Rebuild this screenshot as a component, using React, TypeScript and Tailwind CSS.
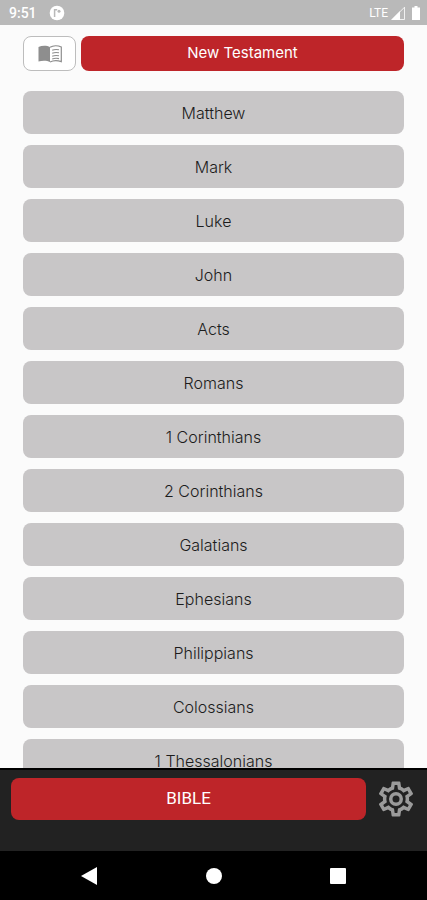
import React, { useState } from 'react';

const books = [
  'Matthew',
  'Mark',
  'Luke',
  'John',
  'Acts',
  'Romans',
  '1 Corinthians',
  '2 Corinthians',
  'Galatians',
  'Ephesians',
  'Philippians',
  'Colossians',
  '1 Thessalonians',
];

function BookIcon() {
  return (
    <svg viewBox="0 0 24 20" className="h-5 w-6" aria-hidden="true">
      <path d="M0.5 3C4 1.4 9 1.4 12 3.2V18c-3-1.6-8-1.6-11.5-.4z" fill="currentColor" />
      <path d="M12 3.2c3-1.8 8-1.8 11.3-.2v14.6C20 16.4 15 16.4 12 18" fill="none" stroke="currentColor" strokeWidth="1.2" />
      <path d="M14.2 6.2c2-.8 4.6-.9 6.8-.4M14.2 9.2c2-.8 4.6-.9 6.8-.4M14.2 12.2c2-.8 4.6-.9 6.8-.4M14.2 15c2-.8 4.6-.9 6.8-.4" fill="none" stroke="currentColor" strokeWidth="1.1" />
    </svg>
  );
}

function CogIcon() {
  return (
    <svg viewBox="0 0 24 24" className="size-[42px]" fill="currentColor" aria-hidden="true">
      <path d="M12,8A4,4 0 0,1 16,12A4,4 0 0,1 12,16A4,4 0 0,1 8,12A4,4 0 0,1 12,8M12,10A2,2 0 0,0 10,12A2,2 0 0,0 12,14A2,2 0 0,0 14,12A2,2 0 0,0 12,10M10,22C9.75,22 9.54,21.82 9.5,21.58L9.13,18.93C8.5,18.68 7.96,18.34 7.44,17.94L4.95,18.95C4.73,19.03 4.46,18.95 4.34,18.73L2.34,15.27C2.21,15.05 2.27,14.78 2.46,14.63L4.57,12.97L4.5,12L4.57,11L2.46,9.37C2.27,9.22 2.21,8.95 2.34,8.73L4.34,5.27C4.46,5.05 4.73,4.96 4.95,5.05L7.44,6.05C7.96,5.66 8.5,5.32 9.13,5.07L9.5,2.42C9.54,2.18 9.75,2 10,2H14C14.25,2 14.46,2.18 14.5,2.42L14.87,5.07C15.5,5.32 16.04,5.66 16.56,6.05L19.05,5.05C19.27,4.96 19.54,5.05 19.66,5.27L21.66,8.73C21.79,8.95 21.73,9.22 21.54,9.37L19.43,11L19.5,12L19.43,13L21.54,14.63C21.73,14.78 21.79,15.05 21.66,15.27L19.66,18.73C19.54,18.95 19.27,19.04 19.05,18.95L16.56,17.95C16.04,18.34 15.5,18.68 14.87,18.93L14.5,21.58C14.46,21.82 14.25,22 14,22H10M11.25,4L10.88,6.61C9.68,6.86 8.62,7.5 7.85,8.39L5.44,7.35L4.69,8.65L6.8,10.2C6.4,11.37 6.4,12.64 6.8,13.8L4.68,15.36L5.43,16.66L7.86,15.62C8.63,16.5 9.68,17.14 10.87,17.38L11.24,20H12.76L13.13,17.39C14.32,17.14 15.37,16.5 16.14,15.62L18.57,16.66L19.32,15.36L17.2,13.81C17.6,12.64 17.6,11.37 17.2,10.2L19.31,8.65L18.56,7.35L16.15,8.39C15.38,7.5 14.32,6.86 13.12,6.62L12.75,4H11.25Z" />
    </svg>
  );
}

function StatusBar() {
  return (
    <div className="flex h-[25px] shrink-0 items-center justify-between bg-[#b9b9b9] pr-[7px] pl-[9px] text-white">
      <div className="flex items-center gap-3">
        <span className="font-['Roboto',sans-serif] text-sm font-medium">9:51</span>
        <svg viewBox="0 0 16 16" className="size-4" aria-hidden="true">
          <circle cx="8" cy="8" r="7.3" fill="#fff" />
          <path d="M5.6 4v8M5.6 4.8h2.6" fill="none" stroke="#b9b9b9" strokeWidth="1.5" />
          <circle cx="10" cy="6.2" r="1.5" fill="#b9b9b9" />
        </svg>
      </div>
      <div className="flex items-center gap-[3px]">
        <span className="font-['Roboto',sans-serif] text-xs">LTE</span>
        <svg viewBox="0 0 14 14" className="size-3.5" aria-hidden="true">
          <path d="M9 5v9H0z" fill="#fff" />
          <path d="M13.5 1.2v12.3H1.2z" fill="none" stroke="#fff" strokeOpacity="0.8" />
        </svg>
        <svg viewBox="0 0 8 14" className="ml-1 h-3.5 w-2" aria-hidden="true">
          <path d="M2.5 0h3v1.5H8V14H0V1.5h2.5z" fill="#fff" />
        </svg>
      </div>
    </div>
  );
}

function NavBar() {
  return (
    <nav className="flex h-[49px] shrink-0 items-center justify-between bg-black px-[81px] text-white">
      <button aria-label="Back">
        <svg viewBox="0 0 16 18" className="h-[18px] w-4">
          <path d="M16 0v18L0 9z" fill="currentColor" />
        </svg>
      </button>
      <button aria-label="Home" className="size-4 rounded-full bg-white" />
      <button aria-label="Recent apps" className="size-4 rounded-[1px] bg-white" />
    </nav>
  );
}

function App() {
  const [selected, setSelected] = useState('');

  return (
    <div className="flex h-screen flex-col bg-[#fbfbfb] font-['Inter',sans-serif]">
      <StatusBar />

      {/* Testament header */}
      <header className="flex shrink-0 gap-[5px] px-[23px] pt-[11px] pb-5">
        <button
          aria-label="Open reader"
          className="flex h-[35px] w-[53px] items-center justify-center rounded-lg border border-[#bdbdbd] bg-white text-[#8e8e8e]"
        >
          <BookIcon />
        </button>
        <button className="h-[35px] flex-1 rounded-lg bg-[#be2529] text-[15px] text-white">
          New Testament
        </button>
      </header>

      {/* Book list */}
      <main className="min-h-0 flex-1 overflow-y-auto px-[23px] [scrollbar-width:none]">
        <ul className="flex flex-col gap-[11px]">
          {books.map((book) => (
            <li key={book}>
              <button
                onClick={() => setSelected(book)}
                aria-pressed={selected === book}
                className="h-[43px] w-full rounded-lg bg-[#c8c6c7] text-base font-light text-[#1c1c1c]"
              >
                {book}
              </button>
            </li>
          ))}
        </ul>
      </main>

      {/* Bottom bar */}
      <footer className="flex shrink-0 items-center gap-[9px] border-t-2 border-black bg-[#222] pt-2 pr-[10px] pb-[31px] pl-[11px]">
        <button className="h-[42px] flex-1 rounded-lg bg-[#be2529] font-['Roboto',sans-serif] text-[17px] text-white">
          BIBLE
        </button>
        <button aria-label="Settings" className="text-[#9b9b9b]">
          <CogIcon />
        </button>
      </footer>
      <NavBar />
    </div>
  );
}

export default App;
